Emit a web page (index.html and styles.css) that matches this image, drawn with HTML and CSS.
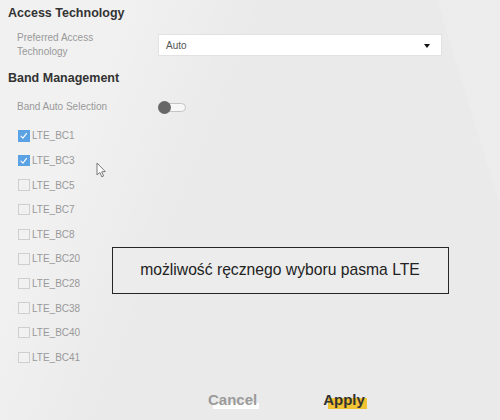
FILE: index.html
```html
<!DOCTYPE html>
<html lang="pl">
<head>
<meta charset="utf-8">
<title>Band Management</title>
<link rel="stylesheet" href="styles.css">
</head>
<body>
<div class="page">
  <h2 class="title">Access Technology</h2>
  <div class="row row-pref">
    <div class="label">Preferred Access<br>Technology</div>
    <div class="select"><span>Auto</span><span class="caret"></span></div>
  </div>

  <h2 class="title title-band">Band Management</h2>
  <div class="row row-auto">
    <div class="label">Band Auto Selection</div>
    <div class="toggle"><span class="track"></span><span class="knob"></span></div>
  </div>

  <ul class="bands">
    <li class="band"><span class="box checked"><svg viewBox="0 0 12 12"><polyline points="2.5,6.5 5,9 9.5,3" /></svg></span><span class="name">LTE_BC1</span></li>
    <li class="band"><span class="box checked"><svg viewBox="0 0 12 12"><polyline points="2.5,6.5 5,9 9.5,3" /></svg></span><span class="name">LTE_BC3</span></li>
    <li class="band"><span class="box"></span><span class="name">LTE_BC5</span></li>
    <li class="band"><span class="box"></span><span class="name">LTE_BC7</span></li>
    <li class="band"><span class="box"></span><span class="name">LTE_BC8</span></li>
    <li class="band"><span class="box"></span><span class="name">LTE_BC20</span></li>
    <li class="band"><span class="box"></span><span class="name">LTE_BC28</span></li>
    <li class="band"><span class="box"></span><span class="name">LTE_BC38</span></li>
    <li class="band"><span class="box"></span><span class="name">LTE_BC40</span></li>
    <li class="band"><span class="box"></span><span class="name">LTE_BC41</span></li>
  </ul>

  <div class="actions">
    <span class="btn cancel">Cancel</span>
    <span class="btn apply">Apply</span>
  </div>

  <div class="note">możliwość ręcznego wyboru pasma LTE</div>

  <svg class="cursor" viewBox="0 0 10 16" width="10" height="16">
    <path d="M1 1 L1 13 L3.8 10.4 L5.8 14.8 L7.6 14 L5.7 9.8 L9.3 9.6 Z" />
  </svg>
</div>
</body>
</html>
```

FILE: styles.css
```css
html, body {
  margin: 0;
  padding: 0;
}
body {
  width: 500px;
  height: 420px;
  overflow: hidden;
  font-family: "Liberation Sans", Arial, sans-serif;
  background:
    linear-gradient(112deg, rgba(255,255,255,0.35) 0 18%, rgba(255,255,255,0) 40%),
    linear-gradient(73deg, rgba(255,255,255,0) 0 90%, rgba(255,255,255,0.12) 90% 100%),
    #eaeaea;
}
.page {
  position: relative;
  height: 420px;
  padding: 5px 8px 0 8px;
  box-sizing: border-box;
}
.title {
  margin: 0;
  font-size: 12.5px;
  line-height: 16px;
  font-weight: bold;
  color: #333;
}
.title-band {
  margin-top: 10.4px;
}
.row {
  display: grid;
  grid-template-columns: 141px 284px;
  align-items: center;
  padding-left: 9px;
}
.row-pref {
  margin-top: 10.4px;
}
.label {
  font-size: 10px;
  line-height: 14px;
  color: #999;
}
.select {
  height: 22px;
  box-sizing: border-box;
  background: #fff;
  border: 1px solid #e2e2e2;
  display: flex;
  align-items: center;
  justify-content: space-between;
  padding: 0 11px 0 7px;
  font-size: 10px;
  color: #555;
}
.caret {
  width: 0;
  height: 0;
  border-left: 3px solid transparent;
  border-right: 3px solid transparent;
  border-top: 4px solid #111;
  margin-top: 1px;
}
.row-auto {
  margin-top: 9.2px;
  height: 24.6px;
}
.toggle {
  position: relative;
  width: 28px;
  height: 13px;
  display: flex;
  align-items: center;
}
.track {
  position: absolute;
  left: 5px;
  right: 0;
  top: 2px;
  height: 9px;
  box-sizing: border-box;
  border: 1px solid #c4c4c4;
  border-radius: 5px;
  background: #f7f7f7;
}
.knob {
  position: relative;
  width: 13px;
  height: 13px;
  border-radius: 50%;
  background: #676767;
}
.bands {
  list-style: none;
  margin: 4.1px 0 0 0;
  padding: 0 0 0 10px;
}
.band {
  height: 24.6px;
  display: flex;
  align-items: center;
}
.box {
  width: 11.5px;
  height: 11.5px;
  box-sizing: border-box;
  border: 1px solid #cfcfcf;
  background: #f1f1f1;
  margin-right: 2.5px;
  display: flex;
}
.box svg {
  width: 100%;
  height: 100%;
}
.box polyline {
  fill: none;
  stroke: #fff;
  stroke-width: 1.4;
  stroke-linecap: round;
  stroke-linejoin: round;
}
.box.checked {
  background: #5aa2e4;
  border-color: #5aa2e4;
}
.name {
  font-size: 10px;
  color: #999;
}
.actions {
  margin-top: 21.3px;
  padding-left: 200px;
  display: flex;
  gap: 66px;
}
.btn {
  position: relative;
  font-size: 15px;
  line-height: 18px;
  font-weight: bold;
}
.btn::after {
  content: "";
  position: absolute;
  z-index: -1;
}
.cancel {
  color: #9b9b9b;
}
.cancel::after {
  left: 5px;
  width: 46px;
  top: 12px;
  height: 6px;
  background: #fff;
}
.apply {
  color: #333;
}
.apply::after {
  left: 5px;
  width: 39px;
  top: 7px;
  height: 11px;
  background: #f1c232;
}
.note {
  position: absolute;
  left: 111.5px;
  top: 246.5px;
  width: 337px;
  height: 47.5px;
  box-sizing: border-box;
  border: 1.6px solid #262626;
  background: #ececec;
  display: flex;
  align-items: center;
  justify-content: center;
  font-size: 15.7px;
  color: #222;
}
.cursor {
  position: absolute;
  left: 96px;
  top: 162px;
}
.cursor path {
  fill: #fff;
  stroke: #777;
  stroke-width: 1;
  stroke-linejoin: round;
}
```
